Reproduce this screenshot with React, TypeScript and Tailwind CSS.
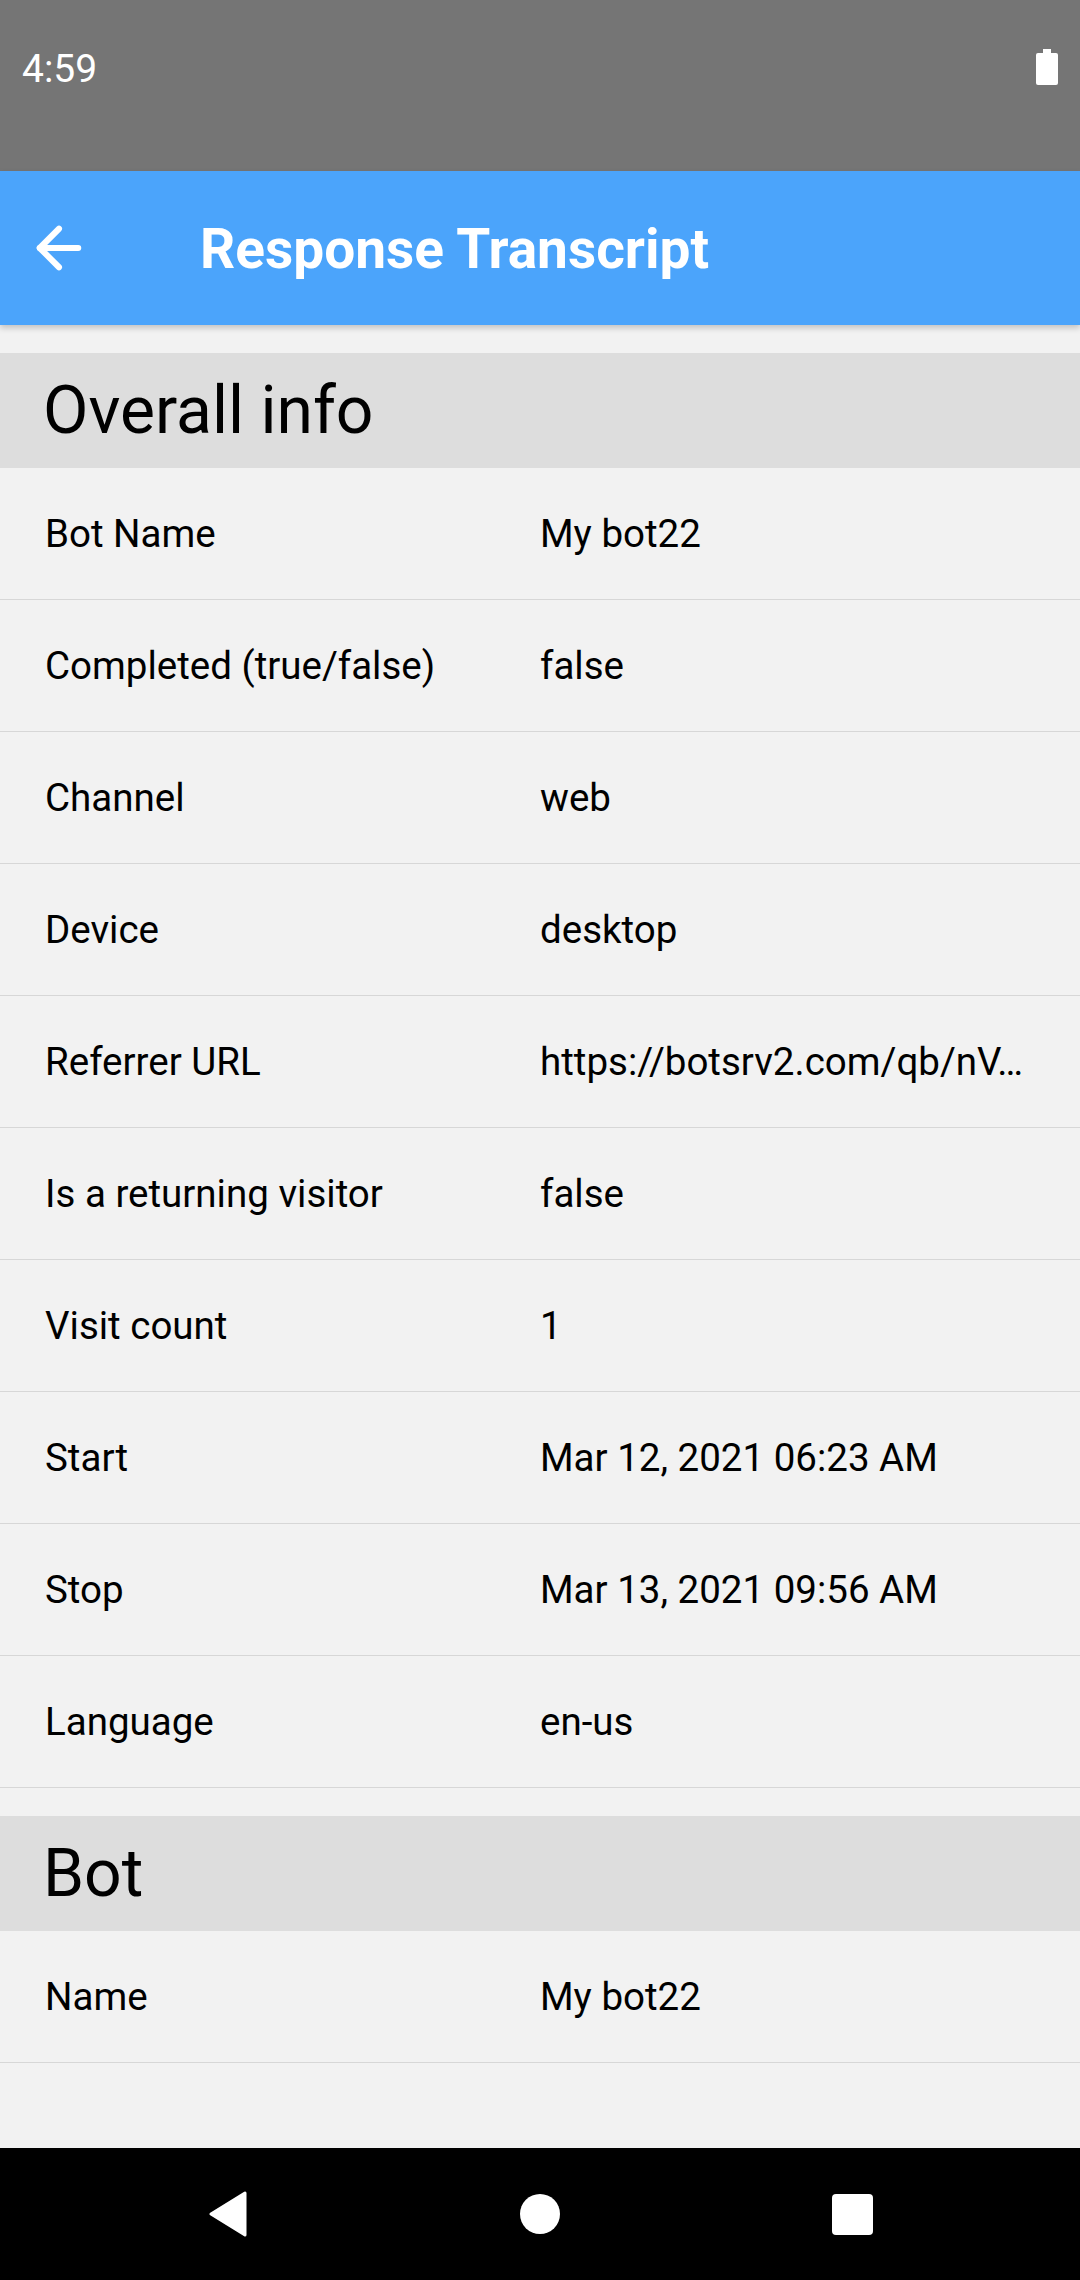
import { ArrowLeft } from 'lucide-react'

type Row = { label: string; value: string }

const overallRows: Row[] = [
  { label: 'Bot Name', value: 'My bot22' },
  { label: 'Completed (true/false)', value: 'false' },
  { label: 'Channel', value: 'web' },
  { label: 'Device', value: 'desktop' },
  { label: 'Referrer URL', value: 'https://botsrv2.com/qb/nV…' },
  { label: 'Is a returning visitor', value: 'false' },
  { label: 'Visit count', value: '1' },
  { label: 'Start', value: 'Mar 12, 2021 06:23 AM' },
  { label: 'Stop', value: 'Mar 13, 2021 09:56 AM' },
  { label: 'Language', value: 'en-us' },
]

const botRows: Row[] = [{ label: 'Name', value: 'My bot22' }]

function SectionHeader({ title }: { title: string }) {
  return (
    <div className="flex h-[115px] items-center bg-[#dddddd] px-[43px]">
      <h2 className="text-[66px] leading-none text-black">{title}</h2>
    </div>
  )
}

function InfoRow({ label, value }: Row) {
  return (
    <div className="flex h-[132px] items-center border-b border-[#d7d7d7] px-[45px] text-[38.5px] text-black">
      <div className="w-[495px] shrink-0 truncate">{label}</div>
      <div className="min-w-0 flex-1 truncate">{value}</div>
    </div>
  )
}

export default function App() {
  return (
    <div
      className="flex h-[2280px] w-[1080px] flex-col overflow-hidden bg-[#f2f2f2]"
      style={{ fontFamily: 'Roboto, "Noto Sans", sans-serif' }}
    >
      {/* status bar */}
      <div className="flex h-[171px] shrink-0 items-start justify-between bg-[#757575] px-[22px] pt-[50px]">
        <span className="text-[39px] leading-none text-white">4:59</span>
        <svg width="22" height="36" viewBox="0 0 22 36" className="mt-[-1px]">
          <rect x="7" y="0" width="8" height="5" fill="#fff" />
          <rect x="0" y="4" width="22" height="32" rx="2" fill="#fff" />
        </svg>
      </div>

      {/* app bar */}
      <div className="relative z-10 flex h-[154px] shrink-0 items-center bg-[#4ba4fb] shadow-[0_3px_6px_rgba(0,0,0,0.2)]">
        <div className="flex w-[200px] items-center pl-[26px]">
          <ArrowLeft className="h-[66px] w-[66px] text-white" strokeWidth={2.2} />
        </div>
        <h1 className="mt-[3px] text-[55px] font-bold leading-none text-white">Response Transcript</h1>
      </div>

      <div className="flex-1 overflow-hidden">
        <div className="pt-[28px]">
          <SectionHeader title="Overall info" />
          {overallRows.map((r) => (
            <InfoRow key={r.label} label={r.label} value={r.value} />
          ))}
        </div>
        <div className="pt-[28px]">
          <SectionHeader title="Bot" />
          {botRows.map((r) => (
            <InfoRow key={r.label} label={r.label} value={r.value} />
          ))}
        </div>
      </div>

      {/* nav bar */}
      <div className="flex h-[132px] shrink-0 items-center justify-center bg-black">
        <div className="flex w-[312px] justify-center">
          <svg width="40" height="46" viewBox="0 0 40 46">
            <path d="M37 2 L37 44 L3 23 Z" fill="#fff" stroke="#fff" strokeWidth="3" strokeLinejoin="round" />
          </svg>
        </div>
        <div className="flex w-[312px] justify-center">
          <div className="h-[40px] w-[40px] rounded-full bg-white" />
        </div>
        <div className="flex w-[312px] justify-center">
          <div className="h-[41px] w-[41px] rounded-[4px] bg-white" />
        </div>
      </div>
    </div>
  )
}
